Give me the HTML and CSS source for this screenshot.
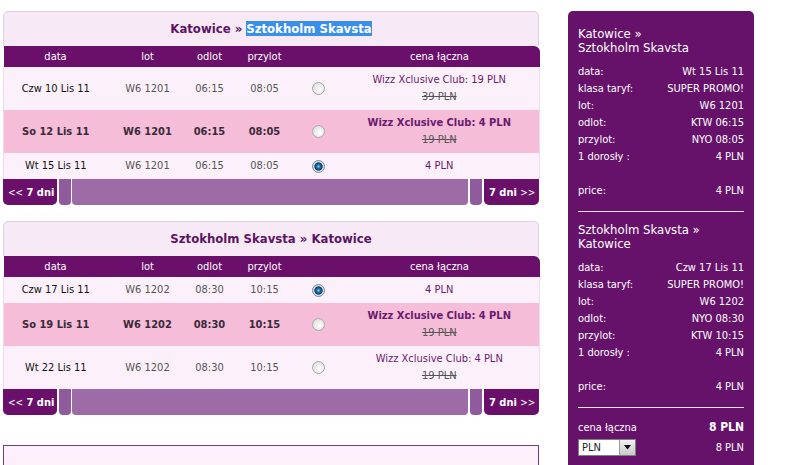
FILE: index.html
```html
<!DOCTYPE html>
<html>
<head>
  <title>Wybór lotu</title>
  <link rel="stylesheet" href="styles.css">
</head>
<body>
  <div class="page">
    <main class="flights">

      <!-- outbound -->
      <section class="panel">
        <h2 class="panel-title">Katowice &raquo; <span class="highlight">Sztokholm Skavsta</span></h2>
        <table class="fares">
          <colgroup>
            <col class="c-date"><col class="c-flight"><col class="c-dep"><col class="c-arr"><col class="c-pick"><col class="c-price">
          </colgroup>
          <thead>
            <tr><th>data</th><th>lot</th><th>odlot</th><th>przylot</th><th></th><th>cena łączna</th></tr>
          </thead>
          <tbody>
            <tr>
              <td class="date">Czw 10 Lis 11</td><td>W6 1201</td><td>06:15</td><td>08:05</td>
              <td><span class="radio"></span></td>
              <td><span class="club">Wizz Xclusive Club: 19 PLN</span><span class="old">39 PLN</span></td>
            </tr>
            <tr class="promo">
              <td class="date">So 12 Lis 11</td><td>W6 1201</td><td>06:15</td><td>08:05</td>
              <td><span class="radio"></span></td>
              <td><span class="club">Wizz Xclusive Club: 4 PLN</span><span class="old">19 PLN</span></td>
            </tr>
            <tr>
              <td class="date">Wt 15 Lis 11</td><td>W6 1201</td><td>06:15</td><td>08:05</td>
              <td><span class="radio checked"></span></td>
              <td><span class="club">4 PLN</span></td>
            </tr>
          </tbody>
        </table>
        <div class="week-nav">
          <a class="week-btn prev" href="#"><small>&lt;&lt;</small> 7 dni</a>
          <span class="stub"></span>
          <span class="fill"></span>
          <span class="stub"></span>
          <a class="week-btn next" href="#">7 dni <small>&gt;&gt;</small></a>
        </div>
      </section>

      <!-- return -->
      <section class="panel">
        <h2 class="panel-title">Sztokholm Skavsta &raquo; Katowice</h2>
        <table class="fares">
          <colgroup>
            <col class="c-date"><col class="c-flight"><col class="c-dep"><col class="c-arr"><col class="c-pick"><col class="c-price">
          </colgroup>
          <thead>
            <tr><th>data</th><th>lot</th><th>odlot</th><th>przylot</th><th></th><th>cena łączna</th></tr>
          </thead>
          <tbody>
            <tr>
              <td class="date">Czw 17 Lis 11</td><td>W6 1202</td><td>08:30</td><td>10:15</td>
              <td><span class="radio checked"></span></td>
              <td><span class="club">4 PLN</span></td>
            </tr>
            <tr class="promo">
              <td class="date">So 19 Lis 11</td><td>W6 1202</td><td>08:30</td><td>10:15</td>
              <td><span class="radio"></span></td>
              <td><span class="club">Wizz Xclusive Club: 4 PLN</span><span class="old">19 PLN</span></td>
            </tr>
            <tr>
              <td class="date">Wt 22 Lis 11</td><td>W6 1202</td><td>08:30</td><td>10:15</td>
              <td><span class="radio"></span></td>
              <td><span class="club">Wizz Xclusive Club: 4 PLN</span><span class="old">19 PLN</span></td>
            </tr>
          </tbody>
        </table>
        <div class="week-nav">
          <a class="week-btn prev" href="#"><small>&lt;&lt;</small> 7 dni</a>
          <span class="stub"></span>
          <span class="fill"></span>
          <span class="stub"></span>
          <a class="week-btn next" href="#">7 dni <small>&gt;&gt;</small></a>
        </div>
      </section>

      <section class="extras"></section>
    </main>

    <aside class="summary">
      <h3>Katowice &raquo;<br>Sztokholm Skavsta</h3>
      <div class="line"><span>data:</span><span>Wt 15 Lis 11</span></div>
      <div class="line"><span>klasa taryf:</span><span>SUPER PROMO!</span></div>
      <div class="line"><span>lot:</span><span>W6 1201</span></div>
      <div class="line"><span>odlot:</span><span>KTW 06:15</span></div>
      <div class="line"><span>przylot:</span><span>NYO 08:05</span></div>
      <div class="line"><span>1 dorosły :</span><span>4 PLN</span></div>
      <div class="line gap"><span>price:</span><span>4 PLN</span></div>
      <hr>
      <h3>Sztokholm Skavsta &raquo;<br>Katowice</h3>
      <div class="line"><span>data:</span><span>Czw 17 Lis 11</span></div>
      <div class="line"><span>klasa taryf:</span><span>SUPER PROMO!</span></div>
      <div class="line"><span>lot:</span><span>W6 1202</span></div>
      <div class="line"><span>odlot:</span><span>NYO 08:30</span></div>
      <div class="line"><span>przylot:</span><span>KTW 10:15</span></div>
      <div class="line"><span>1 dorosły :</span><span>4 PLN</span></div>
      <div class="line gap"><span>price:</span><span>4 PLN</span></div>
      <hr>
      <div class="line total"><span>cena łączna</span><strong>8 PLN</strong></div>
      <div class="line currency">
        <div class="select">
          <span class="select-value">PLN</span>
          <span class="select-btn">
            <svg width="9" height="5" viewBox="0 0 9 5"><path d="M1 0h7L4.5 4.5z" fill="#111"/></svg>
          </span>
        </div>
        <span>8 PLN</span>
      </div>
    </aside>
  </div>
</body>
</html>
```

FILE: styles.css
```css
body {
  margin: 0;
  padding: 0;
  background: #fff;
  font-family: "DejaVu Sans Condensed", "DejaVu Sans", sans-serif;
  font-size: 11px;
  color: #222;
}

.page {
  display: flex;
  align-items: flex-start;
  padding: 11px 0 0 3px;
}

.flights {
  width: 536px;
}

/* flight panels */

.panel {
  margin-bottom: 16px;
}

.panel-title {
  margin: 0;
  height: 34px;
  line-height: 33px;
  text-align: center;
  font-size: 13px;
  font-weight: bold;
  color: #5c1563;
  background: #f8e9f6;
  border: 1px solid #ddd0e2;
  border-bottom: none;
  border-radius: 5px 5px 0 0;
}

.highlight {
  background: #3990ec;
  color: #fff;
}

.fares {
  width: 536px;
  border-collapse: collapse;
  table-layout: fixed;
}

.c-date { width: 104px; }
.c-flight { width: 80px; }
.c-dep { width: 44px; }
.c-arr { width: 66px; }
.c-pick { width: 42px; }
.c-price { width: 200px; }

.fares th {
  height: 21px;
  padding: 0;
  font-weight: normal;
  color: #fff;
  background: #6a106b;
}

.fares th:last-child {
  border-top-right-radius: 6px;
}

.fares td {
  padding: 5px 0;
  line-height: 16px;
  text-align: center;
  vertical-align: middle;
  color: #555;
  background: #fcf1fa;
}

.fares td:first-child {
  border-left: 1px solid #ecdcec;
}

.fares td:last-child {
  border-right: 1px solid #ecdcec;
}

.fares td.date {
  color: #111;
}

.fares tr.promo td {
  height: 33px;
  background: #f5bdd7;
  color: #3a2a3a;
  font-weight: bold;
}

.fares tr.promo .old {
  font-weight: normal;
}

.club {
  display: block;
  color: #6a1a6e;
}

.old {
  display: block;
  line-height: 17px;
  color: #555;
  text-decoration: line-through;
}

.radio {
  display: inline-block;
  width: 11px;
  height: 11px;
  border: 1px solid #a8a8a8;
  border-radius: 50%;
  background: radial-gradient(circle at 60% 60%, #fff 0, #e8e8e8 55%, #d2d2d2 100%);
  vertical-align: middle;
}

.radio.checked {
  border-color: #7d8d9d;
  background: radial-gradient(circle at 50% 50%, #8fc4e8 0, #1f6ea4 25%, #0f3c66 48%, #cfd6dc 58%, #eef0f2 100%);
}

.week-nav {
  display: flex;
  height: 26px;
}

.week-btn {
  width: 54px;
  line-height: 27px;
  padding-left: 5px;
  box-sizing: border-box;
  color: #fff;
  font-weight: bold;
  text-decoration: none;
  background: #6a106b;
  border-radius: 0 0 5px 5px;
}

.week-btn small {
  font-size: 10px;
  font-weight: normal;
}

.week-btn.next {
  width: 55px;
  margin-left: 2px;
}

.stub {
  width: 12px;
  margin-left: 2px;
  background: #8f5b9c;
  border-radius: 0 0 4px 4px;
}

.fill {
  flex: 1;
  margin-left: 1px;
  background: #9d6ba6;
  border-radius: 0 0 4px 4px;
}

.extras {
  margin-top: 30px;
  height: 40px;
  background: #fdf0fb;
  border: 1px solid #6b4079;
}

/* booking summary */

.summary {
  width: 186px;
  min-height: 470px;
  margin-left: 29px;
  padding: 16px 10px 0;
  box-sizing: border-box;
  background: #66126a;
  color: #fff;
  border-radius: 5px 5px 0 0;
}

.summary h3 {
  margin: 0 0 8px;
  font-size: 13px;
  font-weight: normal;
  line-height: 14px;
}

.line {
  display: flex;
  justify-content: space-between;
  align-items: center;
  line-height: 17px;
}

.line.gap {
  margin-top: 17px;
}

.summary hr {
  margin: 12px 0 11px;
  border: none;
  border-top: 1px solid #f4e6f4;
}

.line.total strong {
  font-size: 12px;
}

.line.currency {
  margin-top: 3px;
}

.select {
  display: flex;
  width: 58px;
  height: 17px;
  box-sizing: border-box;
  background: #fff;
  border: 1px solid #7f7f7f;
}

.select-value {
  flex: 1;
  padding-left: 3px;
  line-height: 15px;
  color: #222;
}

.select-btn {
  display: flex;
  align-items: center;
  justify-content: center;
  width: 15px;
  background: linear-gradient(#f2f2f2, #c9c9c9);
  border-left: 1px solid #9a9a9a;
}
```
